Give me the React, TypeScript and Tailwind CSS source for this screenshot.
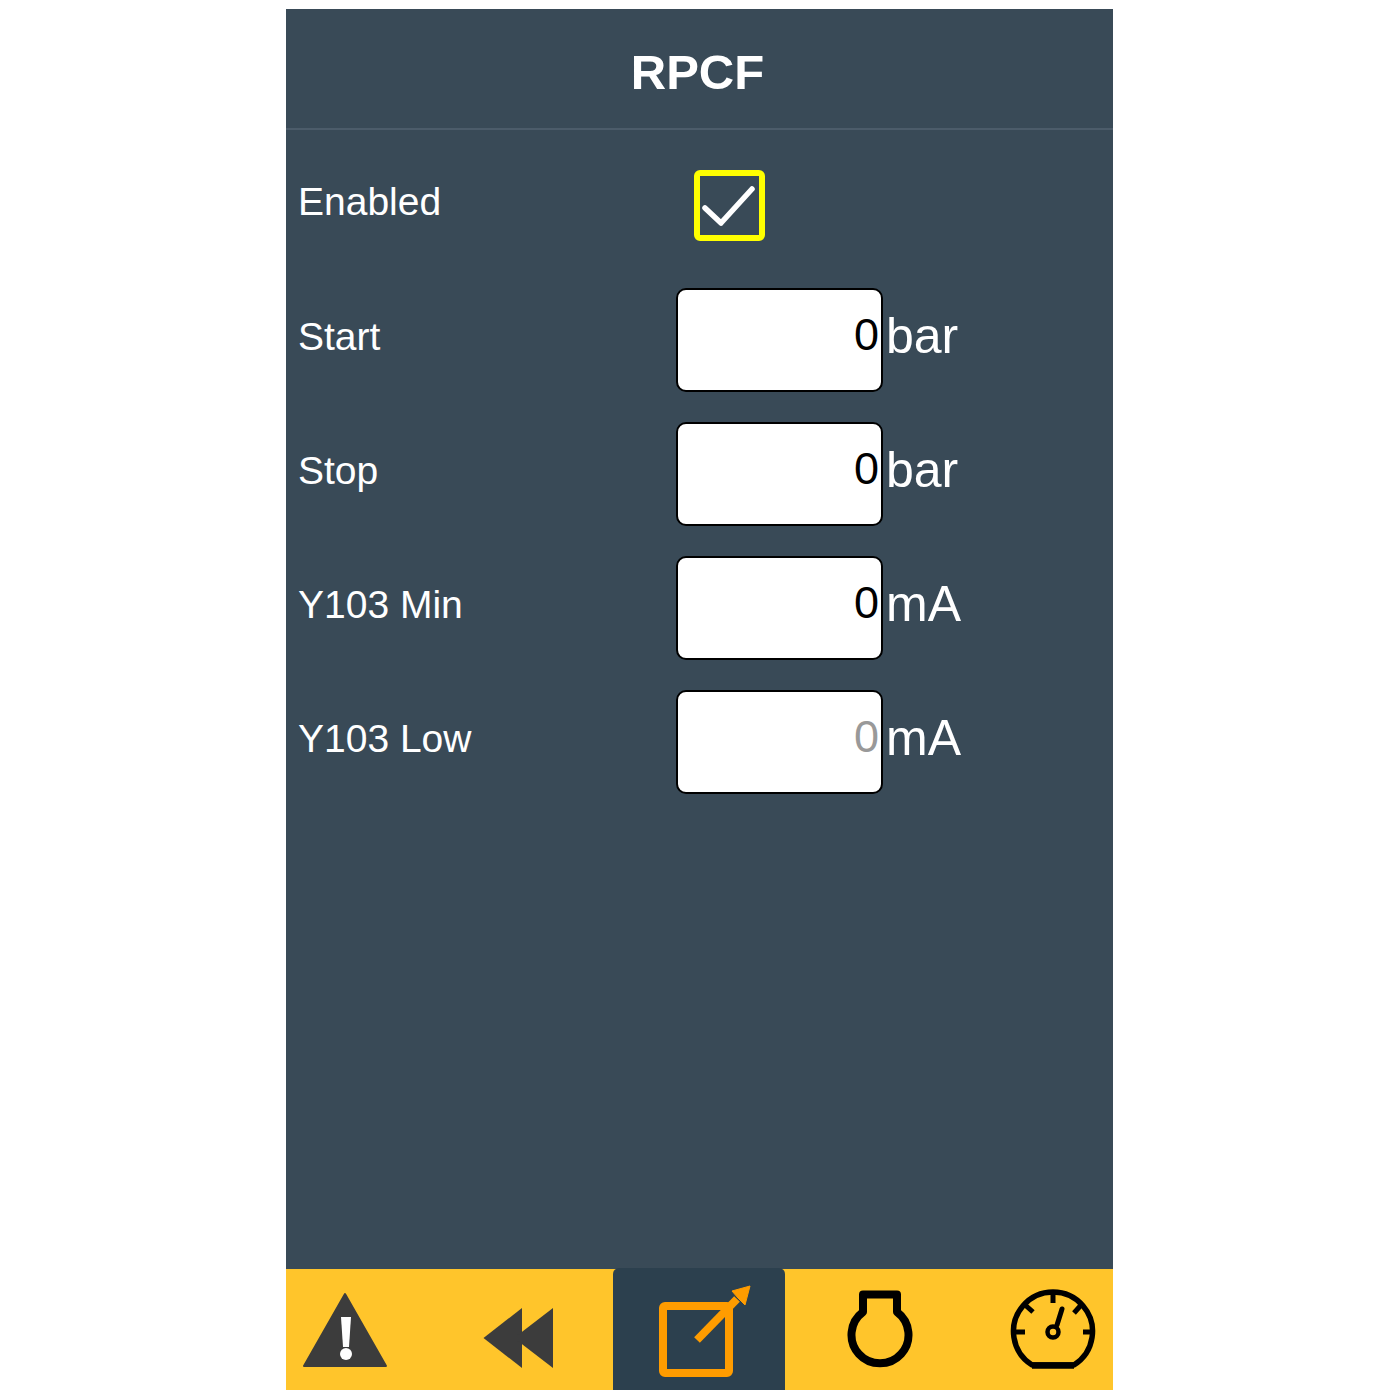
const font = { fontFamily: '"Liberation Sans", Arial, sans-serif' };

function Row({ label, value, unit, dim }: { label: string; value: string; unit: string; dim?: boolean }) {
  return (
    <div className="flex h-[134px] items-start">
      <div className="w-[390px] shrink-0 pl-3 pt-[26px] text-[39px] leading-[45px] text-white">{label}</div>
      <div className="flex h-[104px] w-[207px] shrink-0 items-start justify-end rounded-[10px] border-2 border-black bg-white pr-[2px] pt-[19px] text-[45px] leading-[52px]">
        <span className={dim ? "text-[#999999]" : "text-black"}>{value}</span>
      </div>
      <div className="pl-[3px] pt-[20px] text-[50px] leading-[57px] text-white">{unit}</div>
    </div>
  );
}

export default function App() {
  return (
    <div className="flex min-h-[1400px] justify-center bg-white pt-[9px]" style={font}>
      <div className="mr-px flex h-[1381px] w-[827px] flex-col bg-[#394a57]">
        <div className="flex h-[121px] shrink-0 items-start justify-center border-b-2 border-[#4c5c6a] pt-[35px] pr-[4px] text-[49px] font-bold leading-[56px] text-white">
          RPCF
        </div>
        <div className="flex-1 pt-[24px]">
          <div className="flex h-[134px] items-start">
            <div className="w-[408px] shrink-0 pl-3 pt-[25px] text-[39px] leading-[45px] text-white">Enabled</div>
            <div className="mt-[16px] flex h-[71px] w-[71px] items-center justify-center rounded-[6px] border-[6px] border-[#ffff00]">
              <svg width="59" height="59" viewBox="0 0 59 59" fill="none">
                <path d="M5 32 L21 47 L52 13" stroke="#fff" strokeWidth="5.5" strokeLinecap="round" strokeLinejoin="round" />
              </svg>
            </div>
          </div>
          <Row label="Start" value="0" unit="bar" />
          <Row label="Stop" value="0" unit="bar" />
          <Row label="Y103 Min" value="0" unit="mA" />
          <Row label="Y103 Low" value="0" unit="mA" dim />
        </div>
        <div className="flex h-[121px] shrink-0 bg-[#ffc52b]">
          <div className="flex w-[327px] items-start">
            <div className="w-[163px] pl-[16px] pt-[22px]">
              <svg width="86" height="78" viewBox="0 0 86 78">
                <path d="M43 3 L84 75 H2 Z" fill="#3c3c3c" stroke="#3c3c3c" strokeWidth="2" strokeLinejoin="round" />
                <path d="M39 26 H49 L47 56 H41 Z" fill="#fff" />
                <circle cx="44" cy="63" r="6" fill="#fff" />
              </svg>
            </div>
            <div className="pl-[34px] pt-[38px]">
              <svg width="72" height="62" viewBox="0 0 72 62">
                <path d="M0.5 31 L39 1 V61 Z" fill="#3c3c3c" />
                <path d="M31 31 L70 1 V61 Z" fill="#3c3c3c" />
              </svg>
            </div>
          </div>
          <div className="-mt-px flex h-[122px] w-[172px] items-start rounded-t-[6px] bg-[#2c404e] pl-[44px] pt-[16px]">
            <svg width="96" height="100" viewBox="0 0 96 100" fill="none">
              <rect x="6" y="22" width="66" height="67" rx="2" stroke="#ff9c00" strokeWidth="8" />
              <path d="M40 56 L80 15" stroke="#ff9c00" strokeWidth="8" />
              <path d="M93 2 L88 21 L81 14 L75 7 Z" fill="#ff9c00" stroke="#ff9c00" strokeWidth="1" />
            </svg>
          </div>
          <div className="flex flex-1 items-start">
            <div className="pl-[62px] pt-[21px]">
              <svg width="66" height="78" viewBox="0 0 66 78" fill="none">
                <path d="M16 22 V4.5 H50 V22 A28.5 28.5 0 1 1 16 22 Z" stroke="#000" strokeWidth="8" strokeLinejoin="round" />
              </svg>
            </div>
            <div className="pl-[95px] pt-[20px]">
              <svg className="overflow-visible" width="92" height="80" viewBox="0 0 92 80" fill="none" stroke="#000" strokeWidth="5">
                <path d="M24 76 H66 A39.5 39.5 0 1 0 24 76 Z" strokeLinejoin="round" strokeWidth="5.5" />
                <path d="M24 76.5 H66" strokeWidth="6.5" />
                <path d="M45 4 V14 M16 15 L25 23 M74 15 L66 24 M5 43 H17 M75 43 H86" />
                <circle cx="45" cy="43" r="5.5" strokeWidth="4.5" />
                <path d="M49 36 L54 20" strokeLinecap="round" />
              </svg>
            </div>
          </div>
        </div>
      </div>
    </div>
  );
}
